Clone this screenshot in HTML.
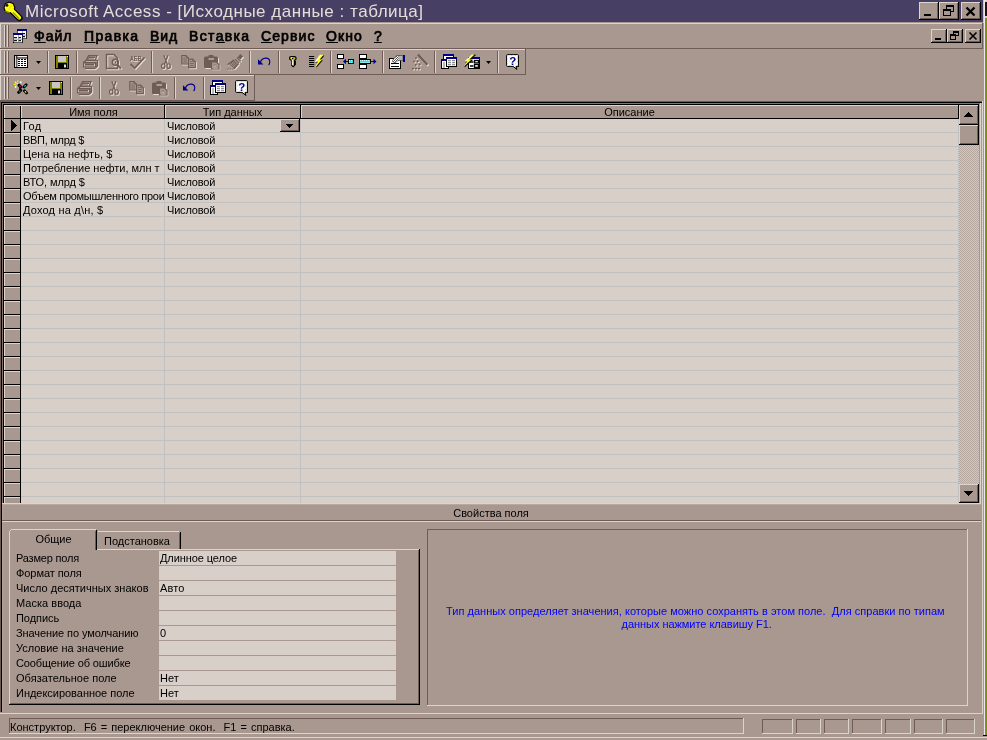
<!DOCTYPE html>
<html><head><meta charset="utf-8"><title>Microsoft Access</title>
<style>
html,body{margin:0;padding:0;background:#a9988f;}
#r{position:relative;width:987px;height:740px;overflow:hidden;background:#a9988f;font-family:"Liberation Sans",sans-serif;}
#r>div,#r>svg{position:absolute;}
#r{will-change:transform;}
.t{white-space:nowrap;}
u{text-decoration:underline;text-underline-offset:1px;text-decoration-thickness:1px;}
</style></head><body><div id="r">
<div style="left:0px;top:0px;width:983px;height:22px;background:#483f64;"></div>
<div class="t" style="left:25px;top:2px;font-size:17px;color:#e6ded6;line-height:20px;letter-spacing:0.523px;">Microsoft Access - [Исходные данные : таблица]</div>
<div style="left:919px;top:2px;width:20px;height:18px;background:#a9988f;"></div>
<div style="left:919px;top:2px;width:19px;height:1px;background:#ddd4cd;"></div>
<div style="left:919px;top:2px;width:1px;height:17px;background:#ddd4cd;"></div>
<div style="left:919px;top:19px;width:20px;height:1px;background:#000;"></div>
<div style="left:938px;top:2px;width:1px;height:18px;background:#000;"></div>
<div style="left:920px;top:18px;width:18px;height:1px;background:#6f5c56;"></div>
<div style="left:937px;top:3px;width:1px;height:16px;background:#6f5c56;"></div>
<div style="left:939px;top:2px;width:20px;height:18px;background:#a9988f;"></div>
<div style="left:939px;top:2px;width:19px;height:1px;background:#ddd4cd;"></div>
<div style="left:939px;top:2px;width:1px;height:17px;background:#ddd4cd;"></div>
<div style="left:939px;top:19px;width:20px;height:1px;background:#000;"></div>
<div style="left:958px;top:2px;width:1px;height:18px;background:#000;"></div>
<div style="left:940px;top:18px;width:18px;height:1px;background:#6f5c56;"></div>
<div style="left:957px;top:3px;width:1px;height:16px;background:#6f5c56;"></div>
<div style="left:961px;top:2px;width:20px;height:18px;background:#a9988f;"></div>
<div style="left:961px;top:2px;width:19px;height:1px;background:#ddd4cd;"></div>
<div style="left:961px;top:2px;width:1px;height:17px;background:#ddd4cd;"></div>
<div style="left:961px;top:19px;width:20px;height:1px;background:#000;"></div>
<div style="left:980px;top:2px;width:1px;height:18px;background:#000;"></div>
<div style="left:962px;top:18px;width:18px;height:1px;background:#6f5c56;"></div>
<div style="left:979px;top:3px;width:1px;height:16px;background:#6f5c56;"></div>
<div style="left:983px;top:0px;width:1px;height:23px;background:#cfc5be;"></div>
<div style="left:984px;top:0px;width:1px;height:740px;background:#efe8ea;"></div>
<div style="left:985px;top:0px;width:2px;height:740px;background:#7b9213;"></div>
<div style="left:985px;top:0px;width:2px;height:18px;background:#ddd4cd;"></div>
<div style="left:985px;top:2px;width:2px;height:14px;background:#1a1416;"></div>
<div style="left:983px;top:735px;width:4px;height:1px;background:#000;"></div>
<div style="left:983px;top:736px;width:4px;height:4px;background:#a9988f;"></div>
<div style="left:0px;top:23px;width:982px;height:1px;background:#ddd4cd;"></div>
<div style="left:0px;top:23px;width:1px;height:25px;background:#ddd4cd;"></div>
<div style="left:0px;top:48px;width:983px;height:1px;background:#6f5c56;"></div>
<div style="left:982px;top:23px;width:1px;height:26px;background:#6f5c56;"></div>
<div style="left:4px;top:25px;width:1px;height:22px;background:#ddd4cd;"></div>
<div style="left:5px;top:25px;width:1px;height:22px;background:#6f5c56;"></div>
<div style="left:7px;top:25px;width:1px;height:22px;background:#ddd4cd;"></div>
<div style="left:8px;top:25px;width:1px;height:22px;background:#6f5c56;"></div>
<div class="t" style="left:34px;top:28px;font-size:14px;color:#000;line-height:16px;-webkit-text-stroke:0.7px #000;letter-spacing:1.020px;"><u>Ф</u>айл</div>
<div class="t" style="left:84px;top:28px;font-size:14px;color:#000;line-height:16px;-webkit-text-stroke:0.7px #000;letter-spacing:1.367px;"><u>П</u>равка</div>
<div class="t" style="left:150px;top:28px;font-size:14px;color:#000;line-height:16px;-webkit-text-stroke:0.7px #000;letter-spacing:0.891px;"><u>В</u>ид</div>
<div class="t" style="left:189px;top:28px;font-size:14px;color:#000;line-height:16px;-webkit-text-stroke:0.7px #000;letter-spacing:1.350px;">Вст<u>а</u>вка</div>
<div class="t" style="left:261px;top:28px;font-size:14px;color:#000;line-height:16px;-webkit-text-stroke:0.7px #000;letter-spacing:1.091px;"><u>С</u>ервис</div>
<div class="t" style="left:326px;top:28px;font-size:14px;color:#000;line-height:16px;-webkit-text-stroke:0.7px #000;letter-spacing:1.113px;"><u>О</u>кно</div>
<div class="t" style="left:374px;top:28px;font-size:14px;color:#000;line-height:16px;-webkit-text-stroke:0.7px #000;letter-spacing:0.003px;"><u>?</u></div>
<div style="left:931px;top:29px;width:16px;height:14px;background:#a9988f;"></div>
<div style="left:931px;top:29px;width:15px;height:1px;background:#ddd4cd;"></div>
<div style="left:931px;top:29px;width:1px;height:13px;background:#ddd4cd;"></div>
<div style="left:931px;top:42px;width:16px;height:1px;background:#000;"></div>
<div style="left:946px;top:29px;width:1px;height:14px;background:#000;"></div>
<div style="left:932px;top:41px;width:14px;height:1px;background:#6f5c56;"></div>
<div style="left:945px;top:30px;width:1px;height:12px;background:#6f5c56;"></div>
<div style="left:947px;top:29px;width:16px;height:14px;background:#a9988f;"></div>
<div style="left:947px;top:29px;width:15px;height:1px;background:#ddd4cd;"></div>
<div style="left:947px;top:29px;width:1px;height:13px;background:#ddd4cd;"></div>
<div style="left:947px;top:42px;width:16px;height:1px;background:#000;"></div>
<div style="left:962px;top:29px;width:1px;height:14px;background:#000;"></div>
<div style="left:948px;top:41px;width:14px;height:1px;background:#6f5c56;"></div>
<div style="left:961px;top:30px;width:1px;height:12px;background:#6f5c56;"></div>
<div style="left:965px;top:29px;width:16px;height:14px;background:#a9988f;"></div>
<div style="left:965px;top:29px;width:15px;height:1px;background:#ddd4cd;"></div>
<div style="left:965px;top:29px;width:1px;height:13px;background:#ddd4cd;"></div>
<div style="left:965px;top:42px;width:16px;height:1px;background:#000;"></div>
<div style="left:980px;top:29px;width:1px;height:14px;background:#000;"></div>
<div style="left:966px;top:41px;width:14px;height:1px;background:#6f5c56;"></div>
<div style="left:979px;top:30px;width:1px;height:12px;background:#6f5c56;"></div>
<div style="left:0px;top:49px;width:526px;height:1px;background:#ddd4cd;"></div>
<div style="left:0px;top:49px;width:1px;height:25px;background:#ddd4cd;"></div>
<div style="left:0px;top:74px;width:526px;height:1px;background:#6f5c56;"></div>
<div style="left:525px;top:49px;width:1px;height:26px;background:#6f5c56;"></div>
<div style="left:4px;top:51px;width:1px;height:22px;background:#ddd4cd;"></div>
<div style="left:5px;top:51px;width:1px;height:22px;background:#6f5c56;"></div>
<div style="left:7px;top:51px;width:1px;height:22px;background:#ddd4cd;"></div>
<div style="left:8px;top:51px;width:1px;height:22px;background:#6f5c56;"></div>
<div style="left:47px;top:51px;width:1px;height:22px;background:#6f5c56;"></div>
<div style="left:48px;top:51px;width:1px;height:22px;background:#ddd4cd;"></div>
<div style="left:76px;top:51px;width:1px;height:22px;background:#6f5c56;"></div>
<div style="left:77px;top:51px;width:1px;height:22px;background:#ddd4cd;"></div>
<div style="left:151px;top:51px;width:1px;height:22px;background:#6f5c56;"></div>
<div style="left:152px;top:51px;width:1px;height:22px;background:#ddd4cd;"></div>
<div style="left:249px;top:51px;width:1px;height:22px;background:#6f5c56;"></div>
<div style="left:250px;top:51px;width:1px;height:22px;background:#ddd4cd;"></div>
<div style="left:278px;top:51px;width:1px;height:22px;background:#6f5c56;"></div>
<div style="left:279px;top:51px;width:1px;height:22px;background:#ddd4cd;"></div>
<div style="left:330px;top:51px;width:1px;height:22px;background:#6f5c56;"></div>
<div style="left:331px;top:51px;width:1px;height:22px;background:#ddd4cd;"></div>
<div style="left:382px;top:51px;width:1px;height:22px;background:#6f5c56;"></div>
<div style="left:383px;top:51px;width:1px;height:22px;background:#ddd4cd;"></div>
<div style="left:434px;top:51px;width:1px;height:22px;background:#6f5c56;"></div>
<div style="left:435px;top:51px;width:1px;height:22px;background:#ddd4cd;"></div>
<div style="left:497px;top:51px;width:1px;height:22px;background:#6f5c56;"></div>
<div style="left:498px;top:51px;width:1px;height:22px;background:#ddd4cd;"></div>
<div style="left:0px;top:75px;width:255px;height:1px;background:#ddd4cd;"></div>
<div style="left:0px;top:75px;width:1px;height:25px;background:#ddd4cd;"></div>
<div style="left:0px;top:100px;width:255px;height:1px;background:#6f5c56;"></div>
<div style="left:254px;top:75px;width:1px;height:26px;background:#6f5c56;"></div>
<div style="left:4px;top:77px;width:1px;height:22px;background:#ddd4cd;"></div>
<div style="left:5px;top:77px;width:1px;height:22px;background:#6f5c56;"></div>
<div style="left:7px;top:77px;width:1px;height:22px;background:#ddd4cd;"></div>
<div style="left:8px;top:77px;width:1px;height:22px;background:#6f5c56;"></div>
<div style="left:70px;top:77px;width:1px;height:22px;background:#6f5c56;"></div>
<div style="left:71px;top:77px;width:1px;height:22px;background:#ddd4cd;"></div>
<div style="left:99px;top:77px;width:1px;height:22px;background:#6f5c56;"></div>
<div style="left:100px;top:77px;width:1px;height:22px;background:#ddd4cd;"></div>
<div style="left:174px;top:77px;width:1px;height:22px;background:#6f5c56;"></div>
<div style="left:175px;top:77px;width:1px;height:22px;background:#ddd4cd;"></div>
<div style="left:203px;top:77px;width:1px;height:22px;background:#6f5c56;"></div>
<div style="left:204px;top:77px;width:1px;height:22px;background:#ddd4cd;"></div>
<div style="left:0px;top:101px;width:982px;height:1px;background:#6f5c56;"></div>
<div style="left:1px;top:102px;width:981px;height:1px;background:#000;"></div>
<div style="left:0px;top:101px;width:1px;height:611px;background:#6f5c56;"></div>
<div style="left:1px;top:102px;width:1px;height:610px;background:#000;"></div>
<div style="left:2px;top:103px;width:978px;height:1px;background:#86736b;"></div>
<div style="left:3px;top:104px;width:976px;height:1px;background:#000;"></div>
<div style="left:2px;top:103px;width:1px;height:400px;background:#86736b;"></div>
<div style="left:3px;top:104px;width:1px;height:399px;background:#000;"></div>
<div style="left:980px;top:103px;width:1px;height:401px;background:#ddd4cd;"></div>
<div style="left:982px;top:101px;width:1px;height:613px;background:#ddd4cd;"></div>
<div style="left:0px;top:713px;width:983px;height:1px;background:#ddd4cd;"></div>
<div style="left:4px;top:105px;width:954px;height:398px;background:#d8cfc9;"></div>
<div style="left:4px;top:105px;width:16px;height:398px;background:#a9988f;"></div>
<div style="left:4px;top:105px;width:1px;height:398px;background:#ddd4cd;"></div>
<div style="left:20px;top:105px;width:1px;height:398px;background:#000;"></div>
<div style="left:21px;top:105px;width:937px;height:13px;background:#a9988f;"></div>
<div style="left:4px;top:105px;width:954px;height:1px;background:#ddd4cd;"></div>
<div style="left:4px;top:118px;width:955px;height:1px;background:#000;"></div>
<div style="left:164px;top:105px;width:1px;height:13px;background:#000;"></div>
<div style="left:165px;top:105px;width:1px;height:13px;background:#ddd4cd;"></div>
<div style="left:300px;top:105px;width:1px;height:13px;background:#000;"></div>
<div style="left:301px;top:105px;width:1px;height:13px;background:#ddd4cd;"></div>
<div style="left:21px;top:105px;width:1px;height:13px;background:#ddd4cd;"></div>
<div style="left:958px;top:105px;width:1px;height:14px;background:#000;"></div>
<div class="t" style="left:22px;top:106px;width:143px;font-size:11px;color:#000;text-align:center;line-height:12px;">Имя поля</div>
<div class="t" style="left:165px;top:106px;width:135px;font-size:11px;color:#000;text-align:center;line-height:12px;">Тип данных</div>
<div class="t" style="left:301px;top:106px;width:657px;font-size:11px;color:#000;text-align:center;line-height:12px;">Описание</div>
<div style="left:21px;top:132px;width:937px;height:1px;background:#c1c1c1;"></div>
<div style="left:4px;top:132px;width:16px;height:1px;background:#000;"></div>
<div style="left:5px;top:133px;width:15px;height:1px;background:#ddd4cd;"></div>
<div style="left:21px;top:146px;width:937px;height:1px;background:#c1c1c1;"></div>
<div style="left:4px;top:146px;width:16px;height:1px;background:#000;"></div>
<div style="left:5px;top:147px;width:15px;height:1px;background:#ddd4cd;"></div>
<div style="left:21px;top:160px;width:937px;height:1px;background:#c1c1c1;"></div>
<div style="left:4px;top:160px;width:16px;height:1px;background:#000;"></div>
<div style="left:5px;top:161px;width:15px;height:1px;background:#ddd4cd;"></div>
<div style="left:21px;top:174px;width:937px;height:1px;background:#c1c1c1;"></div>
<div style="left:4px;top:174px;width:16px;height:1px;background:#000;"></div>
<div style="left:5px;top:175px;width:15px;height:1px;background:#ddd4cd;"></div>
<div style="left:21px;top:188px;width:937px;height:1px;background:#c1c1c1;"></div>
<div style="left:4px;top:188px;width:16px;height:1px;background:#000;"></div>
<div style="left:5px;top:189px;width:15px;height:1px;background:#ddd4cd;"></div>
<div style="left:21px;top:202px;width:937px;height:1px;background:#c1c1c1;"></div>
<div style="left:4px;top:202px;width:16px;height:1px;background:#000;"></div>
<div style="left:5px;top:203px;width:15px;height:1px;background:#ddd4cd;"></div>
<div style="left:21px;top:216px;width:937px;height:1px;background:#c1c1c1;"></div>
<div style="left:4px;top:216px;width:16px;height:1px;background:#000;"></div>
<div style="left:5px;top:217px;width:15px;height:1px;background:#ddd4cd;"></div>
<div style="left:21px;top:230px;width:937px;height:1px;background:#c1c1c1;"></div>
<div style="left:4px;top:230px;width:16px;height:1px;background:#000;"></div>
<div style="left:5px;top:231px;width:15px;height:1px;background:#ddd4cd;"></div>
<div style="left:21px;top:244px;width:937px;height:1px;background:#c1c1c1;"></div>
<div style="left:4px;top:244px;width:16px;height:1px;background:#000;"></div>
<div style="left:5px;top:245px;width:15px;height:1px;background:#ddd4cd;"></div>
<div style="left:21px;top:258px;width:937px;height:1px;background:#c1c1c1;"></div>
<div style="left:4px;top:258px;width:16px;height:1px;background:#000;"></div>
<div style="left:5px;top:259px;width:15px;height:1px;background:#ddd4cd;"></div>
<div style="left:21px;top:272px;width:937px;height:1px;background:#c1c1c1;"></div>
<div style="left:4px;top:272px;width:16px;height:1px;background:#000;"></div>
<div style="left:5px;top:273px;width:15px;height:1px;background:#ddd4cd;"></div>
<div style="left:21px;top:286px;width:937px;height:1px;background:#c1c1c1;"></div>
<div style="left:4px;top:286px;width:16px;height:1px;background:#000;"></div>
<div style="left:5px;top:287px;width:15px;height:1px;background:#ddd4cd;"></div>
<div style="left:21px;top:300px;width:937px;height:1px;background:#c1c1c1;"></div>
<div style="left:4px;top:300px;width:16px;height:1px;background:#000;"></div>
<div style="left:5px;top:301px;width:15px;height:1px;background:#ddd4cd;"></div>
<div style="left:21px;top:314px;width:937px;height:1px;background:#c1c1c1;"></div>
<div style="left:4px;top:314px;width:16px;height:1px;background:#000;"></div>
<div style="left:5px;top:315px;width:15px;height:1px;background:#ddd4cd;"></div>
<div style="left:21px;top:328px;width:937px;height:1px;background:#c1c1c1;"></div>
<div style="left:4px;top:328px;width:16px;height:1px;background:#000;"></div>
<div style="left:5px;top:329px;width:15px;height:1px;background:#ddd4cd;"></div>
<div style="left:21px;top:342px;width:937px;height:1px;background:#c1c1c1;"></div>
<div style="left:4px;top:342px;width:16px;height:1px;background:#000;"></div>
<div style="left:5px;top:343px;width:15px;height:1px;background:#ddd4cd;"></div>
<div style="left:21px;top:356px;width:937px;height:1px;background:#c1c1c1;"></div>
<div style="left:4px;top:356px;width:16px;height:1px;background:#000;"></div>
<div style="left:5px;top:357px;width:15px;height:1px;background:#ddd4cd;"></div>
<div style="left:21px;top:370px;width:937px;height:1px;background:#c1c1c1;"></div>
<div style="left:4px;top:370px;width:16px;height:1px;background:#000;"></div>
<div style="left:5px;top:371px;width:15px;height:1px;background:#ddd4cd;"></div>
<div style="left:21px;top:384px;width:937px;height:1px;background:#c1c1c1;"></div>
<div style="left:4px;top:384px;width:16px;height:1px;background:#000;"></div>
<div style="left:5px;top:385px;width:15px;height:1px;background:#ddd4cd;"></div>
<div style="left:21px;top:398px;width:937px;height:1px;background:#c1c1c1;"></div>
<div style="left:4px;top:398px;width:16px;height:1px;background:#000;"></div>
<div style="left:5px;top:399px;width:15px;height:1px;background:#ddd4cd;"></div>
<div style="left:21px;top:412px;width:937px;height:1px;background:#c1c1c1;"></div>
<div style="left:4px;top:412px;width:16px;height:1px;background:#000;"></div>
<div style="left:5px;top:413px;width:15px;height:1px;background:#ddd4cd;"></div>
<div style="left:21px;top:426px;width:937px;height:1px;background:#c1c1c1;"></div>
<div style="left:4px;top:426px;width:16px;height:1px;background:#000;"></div>
<div style="left:5px;top:427px;width:15px;height:1px;background:#ddd4cd;"></div>
<div style="left:21px;top:440px;width:937px;height:1px;background:#c1c1c1;"></div>
<div style="left:4px;top:440px;width:16px;height:1px;background:#000;"></div>
<div style="left:5px;top:441px;width:15px;height:1px;background:#ddd4cd;"></div>
<div style="left:21px;top:454px;width:937px;height:1px;background:#c1c1c1;"></div>
<div style="left:4px;top:454px;width:16px;height:1px;background:#000;"></div>
<div style="left:5px;top:455px;width:15px;height:1px;background:#ddd4cd;"></div>
<div style="left:21px;top:468px;width:937px;height:1px;background:#c1c1c1;"></div>
<div style="left:4px;top:468px;width:16px;height:1px;background:#000;"></div>
<div style="left:5px;top:469px;width:15px;height:1px;background:#ddd4cd;"></div>
<div style="left:21px;top:482px;width:937px;height:1px;background:#c1c1c1;"></div>
<div style="left:4px;top:482px;width:16px;height:1px;background:#000;"></div>
<div style="left:5px;top:483px;width:15px;height:1px;background:#ddd4cd;"></div>
<div style="left:21px;top:496px;width:937px;height:1px;background:#c1c1c1;"></div>
<div style="left:4px;top:496px;width:16px;height:1px;background:#000;"></div>
<div style="left:5px;top:497px;width:15px;height:1px;background:#ddd4cd;"></div>
<div style="left:164px;top:119px;width:1px;height:384px;background:#c1c1c1;"></div>
<div style="left:300px;top:119px;width:1px;height:384px;background:#c1c1c1;"></div>
<div style="left:958px;top:119px;width:1px;height:384px;background:#c1c1c1;"></div>
<div class="t" style="left:23px;top:120px;width:141px;font-size:11px;color:#000;line-height:12px;overflow:hidden;white-space:nowrap;letter-spacing:0.361px;">Год</div>
<div class="t" style="left:167px;top:120px;font-size:11px;color:#000;line-height:12px;letter-spacing:-0.178px;">Числовой</div>
<div class="t" style="left:23px;top:134px;width:141px;font-size:11px;color:#000;line-height:12px;overflow:hidden;white-space:nowrap;letter-spacing:-0.286px;">ВВП, млрд $</div>
<div class="t" style="left:167px;top:134px;font-size:11px;color:#000;line-height:12px;letter-spacing:-0.178px;">Числовой</div>
<div class="t" style="left:23px;top:148px;width:141px;font-size:11px;color:#000;line-height:12px;overflow:hidden;white-space:nowrap;letter-spacing:0.033px;">Цена на нефть, $</div>
<div class="t" style="left:167px;top:148px;font-size:11px;color:#000;line-height:12px;letter-spacing:-0.178px;">Числовой</div>
<div class="t" style="left:23px;top:162px;width:141px;font-size:11px;color:#000;line-height:12px;overflow:hidden;white-space:nowrap;letter-spacing:-0.026px;">Потребление нефти, млн т</div>
<div class="t" style="left:167px;top:162px;font-size:11px;color:#000;line-height:12px;letter-spacing:-0.178px;">Числовой</div>
<div class="t" style="left:23px;top:176px;width:141px;font-size:11px;color:#000;line-height:12px;overflow:hidden;white-space:nowrap;letter-spacing:-0.112px;">ВТО, млрд $</div>
<div class="t" style="left:167px;top:176px;font-size:11px;color:#000;line-height:12px;letter-spacing:-0.178px;">Числовой</div>
<div class="t" style="left:23px;top:190px;width:141px;font-size:11px;color:#000;line-height:12px;overflow:hidden;white-space:nowrap;letter-spacing:-0.299px;">Объем промышленного прои</div>
<div class="t" style="left:167px;top:190px;font-size:11px;color:#000;line-height:12px;letter-spacing:-0.178px;">Числовой</div>
<div class="t" style="left:23px;top:204px;width:141px;font-size:11px;color:#000;line-height:12px;overflow:hidden;white-space:nowrap;letter-spacing:0.198px;">Доход на д\н, $</div>
<div class="t" style="left:167px;top:204px;font-size:11px;color:#000;line-height:12px;letter-spacing:-0.178px;">Числовой</div>
<svg style="left:11px;top:120px" width="7" height="11" shape-rendering="crispEdges"><path d="M0 0 L6 5.5 L0 11Z" fill="#000"/></svg>
<div style="left:280px;top:119px;width:20px;height:13px;background:#a9988f;"></div>
<div style="left:280px;top:119px;width:19px;height:1px;background:#ddd4cd;"></div>
<div style="left:280px;top:119px;width:1px;height:12px;background:#ddd4cd;"></div>
<div style="left:280px;top:131px;width:20px;height:1px;background:#000;"></div>
<div style="left:299px;top:119px;width:1px;height:13px;background:#000;"></div>
<div style="left:281px;top:130px;width:18px;height:1px;background:#6f5c56;"></div>
<div style="left:298px;top:120px;width:1px;height:11px;background:#6f5c56;"></div>
<svg style="left:286px;top:124px" width="7" height="4" shape-rendering="crispEdges"><path d="M0 0H7L3.5 4Z" fill="#000"/></svg>
<div style="left:959px;top:105px;width:20px;height:398px;background:repeating-conic-gradient(#d2c8c1 0% 25%,#b5a69e 0% 50%) 0 0/2px 2px"></div>
<div style="left:959px;top:105px;width:20px;height:20px;background:#a9988f;"></div>
<div style="left:959px;top:105px;width:19px;height:1px;background:#ddd4cd;"></div>
<div style="left:959px;top:105px;width:1px;height:19px;background:#ddd4cd;"></div>
<div style="left:959px;top:124px;width:20px;height:1px;background:#000;"></div>
<div style="left:978px;top:105px;width:1px;height:20px;background:#000;"></div>
<div style="left:960px;top:123px;width:18px;height:1px;background:#6f5c56;"></div>
<div style="left:977px;top:106px;width:1px;height:18px;background:#6f5c56;"></div>
<div style="left:959px;top:125px;width:20px;height:20px;background:#a9988f;"></div>
<div style="left:959px;top:125px;width:19px;height:1px;background:#ddd4cd;"></div>
<div style="left:959px;top:125px;width:1px;height:19px;background:#ddd4cd;"></div>
<div style="left:959px;top:144px;width:20px;height:1px;background:#000;"></div>
<div style="left:978px;top:125px;width:1px;height:20px;background:#000;"></div>
<div style="left:960px;top:143px;width:18px;height:1px;background:#6f5c56;"></div>
<div style="left:977px;top:126px;width:1px;height:18px;background:#6f5c56;"></div>
<div style="left:959px;top:484px;width:20px;height:19px;background:#a9988f;"></div>
<div style="left:959px;top:484px;width:19px;height:1px;background:#ddd4cd;"></div>
<div style="left:959px;top:484px;width:1px;height:18px;background:#ddd4cd;"></div>
<div style="left:959px;top:502px;width:20px;height:1px;background:#000;"></div>
<div style="left:978px;top:484px;width:1px;height:19px;background:#000;"></div>
<div style="left:960px;top:501px;width:18px;height:1px;background:#6f5c56;"></div>
<div style="left:977px;top:485px;width:1px;height:17px;background:#6f5c56;"></div>
<svg style="left:963px;top:112px" width="10" height="5" shape-rendering="crispEdges"><path d="M0 5H10L5 0Z" fill="#000"/></svg>
<svg style="left:963px;top:491px" width="10" height="5" shape-rendering="crispEdges"><path d="M0 0H10L5 5Z" fill="#000"/></svg>
<div style="left:2px;top:503px;width:979px;height:1px;background:#ddd4cd;"></div>
<div style="left:2px;top:504px;width:979px;height:1px;background:#b8a9a0;"></div>
<div style="left:2px;top:504px;width:1px;height:208px;background:#b3a39a;"></div>
<div class="t" style="left:2px;top:507px;width:978px;font-size:11px;color:#000;text-align:center;line-height:12px;">Свойства поля</div>
<div style="left:2px;top:520px;width:979px;height:1px;background:#6f5c56;"></div>
<div style="left:2px;top:521px;width:979px;height:1px;background:#ddd4cd;"></div>
<div style="left:9px;top:549px;width:410px;height:1px;background:#ddd4cd;"></div>
<div style="left:9px;top:549px;width:1px;height:155px;background:#ddd4cd;"></div>
<div style="left:9px;top:704px;width:411px;height:1px;background:#000;"></div>
<div style="left:419px;top:549px;width:1px;height:156px;background:#000;"></div>
<div style="left:10px;top:703px;width:409px;height:1px;background:#6f5c56;"></div>
<div style="left:418px;top:550px;width:1px;height:154px;background:#6f5c56;"></div>
<div style="left:10px;top:530px;width:87px;height:20px;background:#a9988f;"></div>
<div style="left:11px;top:529px;width:85px;height:1px;background:#ddd4cd;"></div>
<div style="left:9px;top:531px;width:1px;height:19px;background:#ddd4cd;"></div>
<div style="left:10px;top:530px;width:1px;height:1px;background:#ddd4cd;"></div>
<div style="left:96px;top:530px;width:1px;height:20px;background:#000;"></div>
<div style="left:95px;top:531px;width:1px;height:19px;background:#6f5c56;"></div>
<div style="left:98px;top:531px;width:81px;height:1px;background:#ddd4cd;"></div>
<div style="left:180px;top:532px;width:1px;height:17px;background:#000;"></div>
<div style="left:179px;top:533px;width:1px;height:16px;background:#6f5c56;"></div>
<div class="t" style="left:10px;top:533px;width:87px;font-size:11px;color:#000;text-align:center;line-height:12px;">Общие</div>
<div class="t" style="left:96px;top:535px;width:82px;font-size:11px;color:#000;text-align:center;line-height:12px;">Подстановка</div>
<div style="left:159px;top:551px;width:237px;height:14px;background:#d8cfc9;"></div>
<div class="t" style="left:16px;top:552px;font-size:11px;color:#000;line-height:12px;letter-spacing:-0.189px;">Размер поля</div>
<div class="t" style="left:160px;top:552px;font-size:11px;color:#000;line-height:12px;letter-spacing:-0.090px;">Длинное целое</div>
<div style="left:159px;top:566px;width:237px;height:14px;background:#d8cfc9;"></div>
<div class="t" style="left:16px;top:567px;font-size:11px;color:#000;line-height:12px;letter-spacing:-0.059px;">Формат поля</div>
<div style="left:159px;top:581px;width:237px;height:14px;background:#d8cfc9;"></div>
<div class="t" style="left:16px;top:582px;font-size:11px;color:#000;line-height:12px;letter-spacing:0.010px;">Число десятичных знаков</div>
<div class="t" style="left:160px;top:582px;font-size:11px;color:#000;line-height:12px;letter-spacing:0.129px;">Авто</div>
<div style="left:159px;top:596px;width:237px;height:14px;background:#d8cfc9;"></div>
<div class="t" style="left:16px;top:597px;font-size:11px;color:#000;line-height:12px;letter-spacing:0.026px;">Маска ввода</div>
<div style="left:159px;top:611px;width:237px;height:14px;background:#d8cfc9;"></div>
<div class="t" style="left:16px;top:612px;font-size:11px;color:#000;line-height:12px;letter-spacing:-0.050px;">Подпись</div>
<div style="left:159px;top:626px;width:237px;height:14px;background:#d8cfc9;"></div>
<div class="t" style="left:16px;top:627px;font-size:11px;color:#000;line-height:12px;letter-spacing:-0.085px;">Значение по умолчанию</div>
<div class="t" style="left:160px;top:627px;font-size:11px;color:#000;line-height:12px;letter-spacing:-0.025px;">0</div>
<div style="left:159px;top:641px;width:237px;height:14px;background:#d8cfc9;"></div>
<div class="t" style="left:16px;top:642px;font-size:11px;color:#000;line-height:12px;letter-spacing:-0.011px;">Условие на значение</div>
<div style="left:159px;top:656px;width:237px;height:14px;background:#d8cfc9;"></div>
<div class="t" style="left:16px;top:657px;font-size:11px;color:#000;line-height:12px;letter-spacing:-0.123px;">Сообщение об ошибке</div>
<div style="left:159px;top:671px;width:237px;height:14px;background:#d8cfc9;"></div>
<div class="t" style="left:16px;top:672px;font-size:11px;color:#000;line-height:12px;letter-spacing:0.038px;">Обязательное поле</div>
<div class="t" style="left:160px;top:672px;font-size:11px;color:#000;line-height:12px;letter-spacing:0.089px;">Нет</div>
<div style="left:159px;top:686px;width:237px;height:14px;background:#d8cfc9;"></div>
<div class="t" style="left:16px;top:687px;font-size:11px;color:#000;line-height:12px;letter-spacing:-0.024px;">Индексированное поле</div>
<div class="t" style="left:160px;top:687px;font-size:11px;color:#000;line-height:12px;letter-spacing:0.089px;">Нет</div>
<div style="left:427px;top:529px;width:541px;height:1px;background:#6f5c56;"></div>
<div style="left:427px;top:529px;width:1px;height:177px;background:#6f5c56;"></div>
<div style="left:427px;top:705px;width:541px;height:1px;background:#ddd4cd;"></div>
<div style="left:967px;top:529px;width:1px;height:177px;background:#ddd4cd;"></div>
<div class="t" style="left:446px;top:605px;font-size:11px;color:#0000ff;line-height:13px;letter-spacing:0.025px;">Тип данных определяет значения, которые можно сохранять в этом поле.&nbsp; Для справки по типам</div>
<div class="t" style="left:621.5px;top:618px;font-size:11px;color:#0000ff;line-height:13px;letter-spacing:-0.036px;">данных нажмите клавишу F1.</div>
<div style="left:9px;top:718px;width:735px;height:1px;background:#6f5c56;"></div>
<div style="left:9px;top:718px;width:1px;height:16px;background:#6f5c56;"></div>
<div style="left:9px;top:733px;width:735px;height:1px;background:#ddd4cd;"></div>
<div style="left:743px;top:718px;width:1px;height:16px;background:#ddd4cd;"></div>
<div style="left:762px;top:719px;width:31px;height:1px;background:#6f5c56;"></div>
<div style="left:762px;top:719px;width:1px;height:15px;background:#6f5c56;"></div>
<div style="left:762px;top:733px;width:31px;height:1px;background:#ddd4cd;"></div>
<div style="left:792px;top:719px;width:1px;height:15px;background:#ddd4cd;"></div>
<div style="left:796px;top:719px;width:25px;height:1px;background:#6f5c56;"></div>
<div style="left:796px;top:719px;width:1px;height:15px;background:#6f5c56;"></div>
<div style="left:796px;top:733px;width:25px;height:1px;background:#ddd4cd;"></div>
<div style="left:820px;top:719px;width:1px;height:15px;background:#ddd4cd;"></div>
<div style="left:824px;top:719px;width:25px;height:1px;background:#6f5c56;"></div>
<div style="left:824px;top:719px;width:1px;height:15px;background:#6f5c56;"></div>
<div style="left:824px;top:733px;width:25px;height:1px;background:#ddd4cd;"></div>
<div style="left:848px;top:719px;width:1px;height:15px;background:#ddd4cd;"></div>
<div style="left:852px;top:719px;width:30px;height:1px;background:#6f5c56;"></div>
<div style="left:852px;top:719px;width:1px;height:15px;background:#6f5c56;"></div>
<div style="left:852px;top:733px;width:30px;height:1px;background:#ddd4cd;"></div>
<div style="left:881px;top:719px;width:1px;height:15px;background:#ddd4cd;"></div>
<div style="left:885px;top:719px;width:26px;height:1px;background:#6f5c56;"></div>
<div style="left:885px;top:719px;width:1px;height:15px;background:#6f5c56;"></div>
<div style="left:885px;top:733px;width:26px;height:1px;background:#ddd4cd;"></div>
<div style="left:910px;top:719px;width:1px;height:15px;background:#ddd4cd;"></div>
<div style="left:914px;top:719px;width:29px;height:1px;background:#6f5c56;"></div>
<div style="left:914px;top:719px;width:1px;height:15px;background:#6f5c56;"></div>
<div style="left:914px;top:733px;width:29px;height:1px;background:#ddd4cd;"></div>
<div style="left:942px;top:719px;width:1px;height:15px;background:#ddd4cd;"></div>
<div style="left:946px;top:719px;width:29px;height:1px;background:#6f5c56;"></div>
<div style="left:946px;top:719px;width:1px;height:15px;background:#6f5c56;"></div>
<div style="left:946px;top:733px;width:29px;height:1px;background:#ddd4cd;"></div>
<div style="left:974px;top:719px;width:1px;height:15px;background:#ddd4cd;"></div>
<div class="t" style="left:10px;top:721px;font-size:11px;color:#000;line-height:12px;word-spacing:1px;">Конструктор.&nbsp; F6 = переключение окон.&nbsp; F1 = справка.</div>
<div style="left:0px;top:737px;width:987px;height:1px;background:#ddd4cd;"></div>
<svg style="left:0;top:0" width="987" height="110" viewBox="0 0 987 110"><defs><pattern id="chk" width="2" height="2" patternUnits="userSpaceOnUse"><rect width="2" height="2" fill="#fff"/><rect width="1" height="1" fill="#555"/><rect x="1" y="1" width="1" height="1" fill="#555"/></pattern><pattern id="dots" width="4" height="4" patternUnits="userSpaceOnUse"><rect width="4" height="4" fill="#fff"/><rect x="1" y="1" width="1.2" height="1.2" fill="#ffff00"/><rect x="3" y="3" width="1.2" height="1.2" fill="#ffff00"/></pattern></defs>
<path d="M11.5 10 L19.4 17.9" fill="none" stroke="#000" stroke-width="6.4" stroke-linecap="round"/>
<path d="M9.3 1.6L13.6 3.2L15.4 7.6L13.6 12L9.3 13.8L5 12.4L3.4 7.8L5 3.2Z" fill="#000" />
<path d="M11.5 10 L19.2 17.7" fill="none" stroke="#ffff00" stroke-width="4" stroke-linecap="round"/>
<path d="M9.3 2.8L12.8 4.1L14.2 7.7L12.8 11.2L9.3 12.6L5.9 11.4L4.6 7.8L5.9 4.1Z" fill="#ffff00" />
<path d="M13 12.4 L19.2 18.6" fill="none" stroke="#8a8a00" stroke-width="1.2" />
<path d="M12.8 10.2 L18.4 15.8" fill="none" stroke="#e8e8a0" stroke-width="1" stroke-dasharray="1 1"/>
<path d="M8.6 9.2 L12.2 5.2" fill="none" stroke="#d0d080" stroke-width="1.5" stroke-dasharray="1 0.8"/>
<ellipse cx="6.9" cy="5.4" rx="1.5" ry="1.4" fill="#1a1a00"/>
<path d="M4.8 11.2 L9.8 13" fill="none" stroke="#7a7a00" stroke-width="1.6" />
<rect x="924" y="14" width="7" height="2" fill="#000"/>
<rect x="946.5" y="5.5" width="7" height="6" fill="none" stroke="#000" stroke-width="1"/>
<rect x="946" y="5" width="8" height="2" fill="#000"/>
<rect x="943.5" y="9.5" width="7" height="6" fill="#a9988f" stroke="#000" stroke-width="1"/>
<rect x="943" y="9" width="8" height="2" fill="#000"/>
<path d="M966.5 7.5 L974.5 15.5 M974.5 7.5 L966.5 15.5" fill="none" stroke="#000" stroke-width="2.3" />
<rect x="935" y="38" width="6" height="2" fill="#000"/>
<rect x="953.5" y="31.5" width="5" height="4" fill="none" stroke="#000" stroke-width="1"/>
<rect x="953" y="31" width="6" height="2" fill="#000"/>
<rect x="950.5" y="34.5" width="5" height="5" fill="#a9988f" stroke="#000" stroke-width="1"/>
<rect x="950" y="34" width="6" height="2" fill="#000"/>
<path d="M969.5 32.5 L976.5 39.5 M976.5 32.5 L969.5 39.5" fill="none" stroke="#000" stroke-width="1.6" />
<rect x="17.5" y="29.5" width="9" height="9" fill="#fff" stroke="#555" stroke-width="1"/>
<rect x="17" y="29" width="10" height="2" fill="#00008c"/>
<rect x="17" y="38" width="10" height="1" fill="#000"/>
<rect x="26" y="31" width="1" height="8" fill="#222"/>
<rect x="18" y="33" width="3" height="1.2" fill="#111"/>
<rect x="22" y="33" width="3" height="1.2" fill="#111"/>
<rect x="18" y="34.8" width="8" height="0.8" fill="#9a9a9a"/>
<rect x="18" y="36" width="3" height="1.2" fill="#111"/>
<rect x="22" y="36" width="3" height="1.2" fill="#111"/>
<rect x="18" y="37.8" width="8" height="0.8" fill="#9a9a9a"/>
<rect x="22" y="31" width="0.8" height="7" fill="#9a9a9a"/>
<rect x="13.5" y="33.5" width="9" height="9" fill="#fff" stroke="#555" stroke-width="1"/>
<rect x="13" y="33" width="10" height="2" fill="#00008c"/>
<rect x="13" y="42" width="10" height="1" fill="#000"/>
<rect x="22" y="35" width="1" height="8" fill="#222"/>
<rect x="14" y="37" width="3" height="1.2" fill="#111"/>
<rect x="18" y="37" width="3" height="1.2" fill="#111"/>
<rect x="14" y="38.8" width="8" height="0.8" fill="#9a9a9a"/>
<rect x="14" y="40" width="3" height="1.2" fill="#111"/>
<rect x="18" y="40" width="3" height="1.2" fill="#111"/>
<rect x="14" y="41.8" width="8" height="0.8" fill="#9a9a9a"/>
<rect x="18" y="35" width="0.8" height="7" fill="#9a9a9a"/>
<path d="M36 61H41L38.5 64.0Z" fill="#000" />
<path d="M486 61H491L488.5 64.0Z" fill="#000" />
<path d="M36 87H41L38.5 90.0Z" fill="#000" />
<rect x="14.5" y="55.5" width="13" height="12" fill="#fff" stroke="#000" stroke-width="1"/>
<rect x="15" y="56" width="12" height="1.7" fill="#9a9a9a"/>
<rect x="17" y="56.1" width="10" height="0.9" fill="#fff"/>
<rect x="15" y="56" width="1.3" height="11" fill="#d8d8d8"/>
<rect x="16.4" y="56" width="0.9" height="11" fill="#000"/>
<rect x="16.4" y="57.6" width="10.6" height="0.9" fill="#000"/>
<rect x="18" y="59" width="2" height="1" fill="#000" shape-rendering="crispEdges"/>
<rect x="21" y="59" width="2" height="1" fill="#000" shape-rendering="crispEdges"/>
<rect x="24" y="59" width="2" height="1" fill="#000" shape-rendering="crispEdges"/>
<rect x="18" y="61" width="2" height="1" fill="#000" shape-rendering="crispEdges"/>
<rect x="21" y="61" width="2" height="1" fill="#000" shape-rendering="crispEdges"/>
<rect x="24" y="61" width="2" height="1" fill="#000" shape-rendering="crispEdges"/>
<rect x="18" y="63" width="2" height="1" fill="#000" shape-rendering="crispEdges"/>
<rect x="21" y="63" width="2" height="1" fill="#000" shape-rendering="crispEdges"/>
<rect x="24" y="63" width="2" height="1" fill="#000" shape-rendering="crispEdges"/>
<rect x="18" y="65" width="2" height="1" fill="#000" shape-rendering="crispEdges"/>
<rect x="21" y="65" width="2" height="1" fill="#000" shape-rendering="crispEdges"/>
<rect x="24" y="65" width="2" height="1" fill="#000" shape-rendering="crispEdges"/>
<rect x="55.5" y="55.5" width="13" height="13" fill="#808000" stroke="#000" stroke-width="1"/>
<rect x="58" y="56" width="8" height="6" fill="#c6c6c6"/>
<rect x="67" y="56" width="1" height="1" fill="#fff"/>
<rect x="58" y="63" width="9" height="5" fill="#000"/>
<rect x="64" y="64.5" width="2" height="3" fill="#e0e0e0"/>
<rect x="49.5" y="81.5" width="13" height="13" fill="#808000" stroke="#000" stroke-width="1"/>
<rect x="52" y="82" width="8" height="6" fill="#c6c6c6"/>
<rect x="61" y="82" width="1" height="1" fill="#fff"/>
<rect x="52" y="89" width="9" height="5" fill="#000"/>
<rect x="58" y="90.5" width="2" height="3" fill="#e0e0e0"/>
<g transform="translate(1,1)">
<path d="M88.5 55.6H97L95 60.5H86Z" fill="none" stroke="#e6ddd6" stroke-width="1.3" />
<path d="M89 57.4H95M88 59H94" fill="none" stroke="#e6ddd6" stroke-width="1.1" />
<path d="M83.5 62.5L86 60.5M95 60.5L97.5 60.5L97.5 66L95.5 68" fill="none" stroke="#e6ddd6" stroke-width="1.3" />
<rect x="83.6" y="62.5" width="12" height="4.5" fill="none" stroke="#e6ddd6" stroke-width="1.3"/>
<path d="M85 64.7H94" fill="none" stroke="#e6ddd6" stroke-width="1.8" />
<path d="M84.5 68.5H95.5" fill="none" stroke="#e6ddd6" stroke-width="1.3" />
<path d="M96.3 62V66.5" fill="none" stroke="#e6ddd6" stroke-width="1" />
<path d="M84.5 63.6H95" fill="none" stroke="#e6ddd6" stroke-width="0.8" />
<path d="M87.5 60L89.5 56H96" fill="none" stroke="#e6ddd6" stroke-width="0.9" />
</g>
<path d="M88.5 55.6H97L95 60.5H86Z" fill="none" stroke="#6f5c56" stroke-width="1.3" />
<path d="M89 57.4H95M88 59H94" fill="none" stroke="#6f5c56" stroke-width="1.1" />
<path d="M83.5 62.5L86 60.5M95 60.5L97.5 60.5L97.5 66L95.5 68" fill="none" stroke="#6f5c56" stroke-width="1.3" />
<rect x="83.6" y="62.5" width="12" height="4.5" fill="none" stroke="#6f5c56" stroke-width="1.3"/>
<path d="M85 64.7H94" fill="none" stroke="#6f5c56" stroke-width="1.8" />
<path d="M84.5 68.5H95.5" fill="none" stroke="#6f5c56" stroke-width="1.3" />
<path d="M96.3 62V66.5" fill="none" stroke="#6f5c56" stroke-width="1" />
<path d="M84.5 63.6H95" fill="none" stroke="#6f5c56" stroke-width="0.8" />
<path d="M87.5 60L89.5 56H96" fill="none" stroke="#6f5c56" stroke-width="0.9" />
<g transform="translate(1,1)">
<path d="M82.5 81.6H91L89 86.5H80Z" fill="none" stroke="#e6ddd6" stroke-width="1.3" />
<path d="M83 83.4H89M82 85H88" fill="none" stroke="#e6ddd6" stroke-width="1.1" />
<path d="M77.5 88.5L80 86.5M89 86.5L91.5 86.5L91.5 92L89.5 94" fill="none" stroke="#e6ddd6" stroke-width="1.3" />
<rect x="77.6" y="88.5" width="12" height="4.5" fill="none" stroke="#e6ddd6" stroke-width="1.3"/>
<path d="M79 90.7H88" fill="none" stroke="#e6ddd6" stroke-width="1.8" />
<path d="M78.5 94.5H89.5" fill="none" stroke="#e6ddd6" stroke-width="1.3" />
<path d="M90.3 88V92.5" fill="none" stroke="#e6ddd6" stroke-width="1" />
<path d="M78.5 89.6H89" fill="none" stroke="#e6ddd6" stroke-width="0.8" />
<path d="M81.5 86L83.5 82H90" fill="none" stroke="#e6ddd6" stroke-width="0.9" />
</g>
<path d="M82.5 81.6H91L89 86.5H80Z" fill="none" stroke="#6f5c56" stroke-width="1.3" />
<path d="M83 83.4H89M82 85H88" fill="none" stroke="#6f5c56" stroke-width="1.1" />
<path d="M77.5 88.5L80 86.5M89 86.5L91.5 86.5L91.5 92L89.5 94" fill="none" stroke="#6f5c56" stroke-width="1.3" />
<rect x="77.6" y="88.5" width="12" height="4.5" fill="none" stroke="#6f5c56" stroke-width="1.3"/>
<path d="M79 90.7H88" fill="none" stroke="#6f5c56" stroke-width="1.8" />
<path d="M78.5 94.5H89.5" fill="none" stroke="#6f5c56" stroke-width="1.3" />
<path d="M90.3 88V92.5" fill="none" stroke="#6f5c56" stroke-width="1" />
<path d="M78.5 89.6H89" fill="none" stroke="#6f5c56" stroke-width="0.8" />
<path d="M81.5 86L83.5 82H90" fill="none" stroke="#6f5c56" stroke-width="0.9" />
<g transform="translate(1,1)">
<path d="M106.5 54.5H114L117.5 58V68.5H106.5Z" fill="none" stroke="#e6ddd6" stroke-width="1.5" />
<circle cx="115.3" cy="62.3" r="3" fill="none" stroke="#e6ddd6" stroke-width="1.6"/>
<path d="M117.5 64.8L121 68.5" fill="none" stroke="#e6ddd6" stroke-width="1.8" />
<path d="M114.5 61L116 62L114.8 63.5" fill="none" stroke="#e6ddd6" stroke-width="1" />
</g>
<path d="M106.5 54.5H114L117.5 58V68.5H106.5Z" fill="none" stroke="#6f5c56" stroke-width="1.5" />
<circle cx="115.3" cy="62.3" r="3" fill="none" stroke="#6f5c56" stroke-width="1.6"/>
<path d="M117.5 64.8L121 68.5" fill="none" stroke="#6f5c56" stroke-width="1.8" />
<path d="M114.5 61L116 62L114.8 63.5" fill="none" stroke="#6f5c56" stroke-width="1" />
<g transform="translate(1,1)">
<text x="130" y="60.6" font-family="Liberation Sans,sans-serif" font-size="6.5" font-weight="bold" fill="#e6ddd6" textLength="11.5" lengthAdjust="spacingAndGlyphs">АБВ</text>
<path d="M130.5 64L134.8 68L144.5 57.5" fill="none" stroke="#e6ddd6" stroke-width="1.8" />
</g>
<text x="130" y="60.6" font-family="Liberation Sans,sans-serif" font-size="6.5" font-weight="bold" fill="#6f5c56" textLength="11.5" lengthAdjust="spacingAndGlyphs">АБВ</text>
<path d="M130.5 64L134.8 68L144.5 57.5" fill="none" stroke="#6f5c56" stroke-width="1.8" />
<g transform="translate(1,1)">
<path d="M163.8 55.3L167.2 64M168 55.3L164.6 64" fill="none" stroke="#e6ddd6" stroke-width="1.15" />
<ellipse cx="163.2" cy="66" rx="1.7" ry="2.3" fill="none" stroke="#e6ddd6" stroke-width="1.15"/>
<ellipse cx="168.6" cy="66" rx="1.7" ry="2.3" fill="none" stroke="#e6ddd6" stroke-width="1.15"/>
</g>
<path d="M163.8 55.3L167.2 64M168 55.3L164.6 64" fill="none" stroke="#6f5c56" stroke-width="1.15" />
<ellipse cx="163.2" cy="66" rx="1.7" ry="2.3" fill="none" stroke="#6f5c56" stroke-width="1.15"/>
<ellipse cx="168.6" cy="66" rx="1.7" ry="2.3" fill="none" stroke="#6f5c56" stroke-width="1.15"/>
<g transform="translate(1,1)">
<path d="M111.8 81.3L115.2 90M116 81.3L112.6 90" fill="none" stroke="#e6ddd6" stroke-width="1.15" />
<ellipse cx="111.2" cy="92" rx="1.7" ry="2.3" fill="none" stroke="#e6ddd6" stroke-width="1.15"/>
<ellipse cx="116.6" cy="92" rx="1.7" ry="2.3" fill="none" stroke="#e6ddd6" stroke-width="1.15"/>
</g>
<path d="M111.8 81.3L115.2 90M116 81.3L112.6 90" fill="none" stroke="#6f5c56" stroke-width="1.15" />
<ellipse cx="111.2" cy="92" rx="1.7" ry="2.3" fill="none" stroke="#6f5c56" stroke-width="1.15"/>
<ellipse cx="116.6" cy="92" rx="1.7" ry="2.3" fill="none" stroke="#6f5c56" stroke-width="1.15"/>
<g transform="translate(1,1)">
<path d="M181.8 55.5H185.9L188.5 58.1V64H181.8Z" fill="none" stroke="#e6ddd6" stroke-width="1.15" />
<path d="M185.9 55.5V58.1H188.5" fill="none" stroke="#e6ddd6" stroke-width="0.8" />
<path d="M183.3 58H184.9M183.3 60H186.9M183.3 62H186.9" fill="none" stroke="#e6ddd6" stroke-width="0.9" />
<path d="M188.60000000000002 59.1H192.70000000000002L195.3 61.7V67.6H188.60000000000002Z" fill="none" stroke="#e6ddd6" stroke-width="1.15" />
<path d="M192.70000000000002 59.1V61.7H195.3" fill="none" stroke="#e6ddd6" stroke-width="0.8" />
<path d="M190.10000000000002 61.6H191.70000000000002M190.10000000000002 63.6H193.70000000000002M190.10000000000002 65.6H193.70000000000002" fill="none" stroke="#e6ddd6" stroke-width="0.9" />
</g>
<path d="M181.8 55.5H185.9L188.5 58.1V64H181.8Z" fill="#a9988f" stroke="#6f5c56" stroke-width="1.15" />
<path d="M185.9 55.5V58.1H188.5" fill="none" stroke="#6f5c56" stroke-width="0.8" />
<path d="M183.3 58H184.9M183.3 60H186.9M183.3 62H186.9" fill="none" stroke="#6f5c56" stroke-width="0.9" />
<path d="M188.60000000000002 59.1H192.70000000000002L195.3 61.7V67.6H188.60000000000002Z" fill="#a9988f" stroke="#6f5c56" stroke-width="1.15" />
<path d="M192.70000000000002 59.1V61.7H195.3" fill="none" stroke="#6f5c56" stroke-width="0.8" />
<path d="M190.10000000000002 61.6H191.70000000000002M190.10000000000002 63.6H193.70000000000002M190.10000000000002 65.6H193.70000000000002" fill="none" stroke="#6f5c56" stroke-width="0.9" />
<g transform="translate(1,1)">
<path d="M129.8 81.5H133.9L136.5 84.1V90H129.8Z" fill="none" stroke="#e6ddd6" stroke-width="1.15" />
<path d="M133.9 81.5V84.1H136.5" fill="none" stroke="#e6ddd6" stroke-width="0.8" />
<path d="M131.3 84H132.9M131.3 86H134.9M131.3 88H134.9" fill="none" stroke="#e6ddd6" stroke-width="0.9" />
<path d="M136.60000000000002 85.1H140.70000000000002L143.3 87.69999999999999V93.6H136.60000000000002Z" fill="none" stroke="#e6ddd6" stroke-width="1.15" />
<path d="M140.70000000000002 85.1V87.69999999999999H143.3" fill="none" stroke="#e6ddd6" stroke-width="0.8" />
<path d="M138.10000000000002 87.6H139.70000000000002M138.10000000000002 89.6H141.70000000000002M138.10000000000002 91.6H141.70000000000002" fill="none" stroke="#e6ddd6" stroke-width="0.9" />
</g>
<path d="M129.8 81.5H133.9L136.5 84.1V90H129.8Z" fill="#a9988f" stroke="#6f5c56" stroke-width="1.15" />
<path d="M133.9 81.5V84.1H136.5" fill="none" stroke="#6f5c56" stroke-width="0.8" />
<path d="M131.3 84H132.9M131.3 86H134.9M131.3 88H134.9" fill="none" stroke="#6f5c56" stroke-width="0.9" />
<path d="M136.60000000000002 85.1H140.70000000000002L143.3 87.69999999999999V93.6H136.60000000000002Z" fill="#a9988f" stroke="#6f5c56" stroke-width="1.15" />
<path d="M140.70000000000002 85.1V87.69999999999999H143.3" fill="none" stroke="#6f5c56" stroke-width="0.8" />
<path d="M138.10000000000002 87.6H139.70000000000002M138.10000000000002 89.6H141.70000000000002M138.10000000000002 91.6H141.70000000000002" fill="none" stroke="#6f5c56" stroke-width="0.9" />
<rect x="205" y="57.5" width="14" height="11.5" rx="1.5" fill="#e6ddd6"/>
<rect x="204" y="56.5" width="14" height="11.5" rx="1.5" fill="#6f5c56"/>
<rect x="208.5" y="55.0" width="5" height="2.5" rx="0.8" fill="#6f5c56"/>
<path d="M208.5 59.0H214" fill="none" stroke="#e6ddd6" stroke-width="1" />
<path d="M212.3 62.8H217.3L219.8 65.3V69.8H212.3Z" fill="none" stroke="#e6ddd6" stroke-width="1" />
<path d="M211.5 62.0H216.5L219 64.5V69.0H211.5Z" fill="#a9988f" stroke="#6f5c56" stroke-width="1.1" />
<path d="M213.3 65.2H216.4M213.3 67.2H217.6" fill="none" stroke="#6f5c56" stroke-width="0.9" />
<path d="M213.3 66.1H216.4M213.3 68.0H217.6" fill="none" stroke="#e6ddd6" stroke-width="0.7" />
<rect x="153" y="83.5" width="14" height="11.5" rx="1.5" fill="#e6ddd6"/>
<rect x="152" y="82.5" width="14" height="11.5" rx="1.5" fill="#6f5c56"/>
<rect x="156.5" y="81.0" width="5" height="2.5" rx="0.8" fill="#6f5c56"/>
<path d="M156.5 85.0H162" fill="none" stroke="#e6ddd6" stroke-width="1" />
<path d="M160.3 88.8H165.3L167.8 91.3V95.8H160.3Z" fill="none" stroke="#e6ddd6" stroke-width="1" />
<path d="M159.5 88.0H164.5L167 90.5V95.0H159.5Z" fill="#a9988f" stroke="#6f5c56" stroke-width="1.1" />
<path d="M161.3 91.2H164.4M161.3 93.2H165.6" fill="none" stroke="#6f5c56" stroke-width="0.9" />
<path d="M161.3 92.1H164.4M161.3 94.0H165.6" fill="none" stroke="#e6ddd6" stroke-width="0.7" />
<g transform="translate(1,1)">
<path d="M241.8 55.2L239 58.4" fill="none" stroke="#e6ddd6" stroke-width="3.6" />
<path d="M237 57.6L240.6 61.2" fill="none" stroke="#e6ddd6" stroke-width="1.3" />
<path d="M235.2 59.4L238.8 63" fill="none" stroke="#e6ddd6" stroke-width="1.3" />
<path d="M234.4 60.2L228.0 64.6" fill="none" stroke="#e6ddd6" stroke-width="1.05" />
<path d="M235.15 60.95L229.25 65.44999999999999" fill="none" stroke="#e6ddd6" stroke-width="1.05" />
<path d="M235.9 61.7L230.5 66.3" fill="none" stroke="#e6ddd6" stroke-width="1.05" />
<path d="M236.65 62.45L231.75 67.14999999999999" fill="none" stroke="#e6ddd6" stroke-width="1.05" />
<path d="M237.4 63.2L233.0 68.0" fill="none" stroke="#e6ddd6" stroke-width="1.05" />
<path d="M238.15 63.95L234.25 68.85" fill="none" stroke="#e6ddd6" stroke-width="1.05" />
<path d="M227.5 64.5L234 59.6" fill="none" stroke="#e6ddd6" stroke-width="1" />
<path d="M227.5 69H228.6M229.6 69H230.7M231.7 69H232.6" fill="none" stroke="#e6ddd6" stroke-width="1.1" />
<path d="M233.5 68.5L239 63.5" fill="none" stroke="#e6ddd6" stroke-width="1" />
</g>
<path d="M241.8 55.2L239 58.4" fill="none" stroke="#6f5c56" stroke-width="3.6" />
<path d="M237 57.6L240.6 61.2" fill="none" stroke="#6f5c56" stroke-width="1.3" />
<path d="M235.2 59.4L238.8 63" fill="none" stroke="#6f5c56" stroke-width="1.3" />
<path d="M234.4 60.2L228.0 64.6" fill="none" stroke="#6f5c56" stroke-width="1.05" />
<path d="M235.15 60.95L229.25 65.44999999999999" fill="none" stroke="#6f5c56" stroke-width="1.05" />
<path d="M235.9 61.7L230.5 66.3" fill="none" stroke="#6f5c56" stroke-width="1.05" />
<path d="M236.65 62.45L231.75 67.14999999999999" fill="none" stroke="#6f5c56" stroke-width="1.05" />
<path d="M237.4 63.2L233.0 68.0" fill="none" stroke="#6f5c56" stroke-width="1.05" />
<path d="M238.15 63.95L234.25 68.85" fill="none" stroke="#6f5c56" stroke-width="1.05" />
<path d="M227.5 64.5L234 59.6" fill="none" stroke="#6f5c56" stroke-width="1" />
<path d="M227.5 69H228.6M229.6 69H230.7M231.7 69H232.6" fill="none" stroke="#6f5c56" stroke-width="1.1" />
<path d="M233.5 68.5L239 63.5" fill="none" stroke="#6f5c56" stroke-width="1" />
<path d="M258 59.2V64.5H263.4Z" fill="#00008c" />
<path d="M260.5 62C262 57.5,269.5 56.5,269.8 61.5C269.8 63.2,269.3 64.3,268.6 65" fill="none" stroke="#00008c" stroke-width="1.15" />
<path d="M183 85.2V90.5H188.4Z" fill="#00008c" />
<path d="M185.5 88C187 83.5,194.5 82.5,194.8 87.5C194.8 89.2,194.3 90.3,193.6 91" fill="none" stroke="#00008c" stroke-width="1.15" />
<path d="M289.6 58Q289.6 56.6,291 56.6H294.6Q296 56.6,296 58V59L294.6 60.6V61.5H295.3V62.5H294.6V63.5H295.3V64.5H294.6V65.3L293.2 66.7L291.6 65.3V60.6L289.6 59Z" fill="#c8c800" stroke="#000" stroke-width="1.2" />
<path d="M292.3 59.2V65.2" fill="none" stroke="#fff" stroke-width="1" />
<path d="M290.8 57.8H292.5" fill="none" stroke="#ffff40" stroke-width="1.2" />
<rect x="292" y="58" width="1.3" height="1.3" fill="#000"/>
<rect x="309" y="56" width="5.2" height="1" fill="#000"/>
<rect x="309" y="58" width="5.2" height="1" fill="#000"/>
<rect x="309" y="60" width="5.2" height="1" fill="#000"/>
<rect x="309" y="62" width="5.2" height="1" fill="#000"/>
<rect x="309" y="64" width="5.2" height="1" fill="#000"/>
<rect x="309" y="66" width="5.2" height="1" fill="#000"/>
<path d="M320.8 55.4L324.4 55.4L320.6 60.2L322.8 60.2L316.6 67.4L316.1 67.1L318.8 62.4L315.6 62.4Z" fill="#000" />
<path d="M320 54.8L323.6 54.8L319.8 59.6L322 59.6L315.8 66.8L315.3 66.5L318 61.8L314.8 61.8Z" fill="#ffff00" />
<path d="M320 55L321.5 55L316.6 61.3L315.2 61.5Z" fill="#fff" />
<rect x="337.5" y="54.5" width="6" height="4" fill="#fff" stroke="#000" stroke-width="1"/>
<rect x="337.5" y="64.5" width="6" height="4" fill="#fff" stroke="#000" stroke-width="1"/>
<path d="M343 61.5L346 58.8V64.2Z" fill="#00008c" />
<rect x="345.5" y="61" width="3" height="1" fill="#00008c"/>
<rect x="348.5" y="59.5" width="5" height="4" fill="#30e0e0" stroke="#000" stroke-width="1"/>
<path d="M349 60.5H353M349 62.5H353" fill="none" stroke="#c8ffff" stroke-width="1" stroke-dasharray="1 1"/>
<rect x="359.5" y="54.5" width="7" height="4" fill="#fff" stroke="#000" stroke-width="1"/>
<rect x="359.5" y="64.5" width="7" height="4" fill="#fff" stroke="#000" stroke-width="1"/>
<rect x="359.5" y="59.5" width="11" height="4" fill="#30e0e0" stroke="#000" stroke-width="1"/>
<path d="M360 60.5H370M360.5 62.5H370" fill="none" stroke="#c8ffff" stroke-width="1" stroke-dasharray="1 1"/>
<rect x="371" y="61" width="3" height="1" fill="#00008c"/>
<path d="M376.5 61.5L373.5 58.8V64.2Z" fill="#00008c" />
<rect x="389.5" y="58.5" width="11" height="10" fill="#fff" stroke="#000" stroke-width="1"/>
<path d="M391 63.5H399M391 66.5H399" fill="none" stroke="#000" stroke-width="1.2" />
<rect x="391" y="62.9" width="2" height="1.2" fill="#000"/>
<path d="M392 61L396.5 55.5H402.5V60.5H398L395 63Z" fill="url(#chk)" stroke="#444" stroke-width="0.7" />
<path d="M398.5 56H402.5V60H398.5Z" fill="#b4b4b4" />
<path d="M393 60.5L396 57M395 61.5L398 58" fill="none" stroke="#fff" stroke-width="0.8" stroke-dasharray="1 1"/>
<rect x="403" y="55" width="2" height="7" fill="#00008c"/>
<g transform="translate(1,1)">
<path d="M418 54.6L427.4 64.8" fill="none" stroke="#e6ddd6" stroke-width="2.4" />
<rect x="415.2" y="57.2" width="1.6" height="1.6" fill="#e6ddd6"/>
<rect x="413.2" y="60.8" width="1.6" height="1.6" fill="#e6ddd6"/>
<rect x="417" y="60.4" width="1.6" height="1.6" fill="#e6ddd6"/>
<rect x="415" y="64" width="1.6" height="1.6" fill="#e6ddd6"/>
<rect x="419" y="63.6" width="1.6" height="1.6" fill="#e6ddd6"/>
<rect x="412" y="68" width="2" height="1.4" fill="#e6ddd6"/>
<rect x="415" y="68" width="2" height="1.4" fill="#e6ddd6"/>
<rect x="418" y="68" width="2" height="1.4" fill="#e6ddd6"/>
</g>
<path d="M418 54.6L427.4 64.8" fill="none" stroke="#6f5c56" stroke-width="2.4" />
<rect x="415.2" y="57.2" width="1.6" height="1.6" fill="#6f5c56"/>
<rect x="413.2" y="60.8" width="1.6" height="1.6" fill="#6f5c56"/>
<rect x="417" y="60.4" width="1.6" height="1.6" fill="#6f5c56"/>
<rect x="415" y="64" width="1.6" height="1.6" fill="#6f5c56"/>
<rect x="419" y="63.6" width="1.6" height="1.6" fill="#6f5c56"/>
<rect x="412" y="68" width="2" height="1.4" fill="#6f5c56"/>
<rect x="415" y="68" width="2" height="1.4" fill="#6f5c56"/>
<rect x="418" y="68" width="2" height="1.4" fill="#6f5c56"/>
<rect x="443.5" y="54.5" width="10" height="8" fill="#fff" stroke="#000" stroke-width="1"/>
<rect x="443" y="54" width="11" height="2" fill="#00008c"/>
<rect x="441.5" y="59.5" width="7" height="9" fill="#fff" stroke="#000" stroke-width="1"/>
<rect x="441" y="59" width="8" height="2" fill="#00008c"/>
<rect x="446.5" y="57.5" width="10" height="9" fill="#fff" stroke="#000" stroke-width="1"/>
<rect x="446" y="57" width="11" height="2" fill="#00008c"/>
<rect x="448" y="60.2" width="3" height="1" fill="#777"/>
<rect x="452" y="60.2" width="3" height="1" fill="#777"/>
<rect x="448" y="62.2" width="3" height="1" fill="#777"/>
<rect x="452" y="62.2" width="3" height="1" fill="#777"/>
<rect x="448" y="64.2" width="3" height="1" fill="#777"/>
<rect x="452" y="64.2" width="3" height="1" fill="#777"/>
<rect x="443" y="62.5" width="2" height="1" fill="#777"/>
<rect x="443" y="64.5" width="2" height="1" fill="#777"/>
<rect x="443" y="66.5" width="2" height="1" fill="#777"/>
<rect x="212.5" y="80.5" width="10" height="8" fill="#fff" stroke="#000" stroke-width="1"/>
<rect x="212" y="80" width="11" height="2" fill="#00008c"/>
<rect x="210.5" y="85.5" width="7" height="9" fill="#fff" stroke="#000" stroke-width="1"/>
<rect x="210" y="85" width="8" height="2" fill="#00008c"/>
<rect x="215.5" y="83.5" width="10" height="9" fill="#fff" stroke="#000" stroke-width="1"/>
<rect x="215" y="83" width="11" height="2" fill="#00008c"/>
<rect x="217" y="86.2" width="3" height="1" fill="#777"/>
<rect x="221" y="86.2" width="3" height="1" fill="#777"/>
<rect x="217" y="88.2" width="3" height="1" fill="#777"/>
<rect x="221" y="88.2" width="3" height="1" fill="#777"/>
<rect x="217" y="90.2" width="3" height="1" fill="#777"/>
<rect x="221" y="90.2" width="3" height="1" fill="#777"/>
<rect x="212" y="88.5" width="2" height="1" fill="#777"/>
<rect x="212" y="90.5" width="2" height="1" fill="#777"/>
<rect x="212" y="92.5" width="2" height="1" fill="#777"/>
<rect x="468.5" y="57.5" width="11" height="11" fill="#fff" stroke="#000" stroke-width="1"/>
<rect x="468" y="57" width="12" height="2" fill="#00008c"/>
<rect x="474.5" y="60.5" width="4" height="2.4" fill="#fff" stroke="#000" stroke-width="1.3"/>
<rect x="474.5" y="64.5" width="4" height="2.8" fill="#fff" stroke="#000" stroke-width="1.3"/>
<path d="M470 62H473.5M470 66H473.5" fill="none" stroke="#000" stroke-width="1.4" />
<path d="M472.7 54.9L475.5 54.9L470.4 60L472.6 60L464.7 67L467.8 62.1L465.2 62.1Z" fill="#000" stroke="#000" stroke-width="0.6" />
<path d="M472 54.4L474.6 54.4L469.4 59.4L471.6 59.4L464 66.3L467.2 61.4L464.6 61.4Z" fill="#ffff00" />
<path d="M472 54.6L472.9 54.6L466 61.2L464.9 61.3Z" fill="#fff" />
<path d="M507.6 55.4H519V67H516.4L517.4 70L513.4 67H507.6Z" fill="#000" />
<path d="M507.5 54.6H517.5Q518.4 54.6,518.4 55.5V65.5Q518.4 66.4,517.5 66.4H516L516.8 69.2L513 66.4H507.5Q506.6 66.4,506.6 65.5V55.5Q506.6 54.6,507.5 54.6Z" fill="url(#dots)" stroke="#000" stroke-width="1" />
<text x="509.3" y="64.6" font-family="Liberation Sans,sans-serif" font-size="11.5" font-weight="bold" fill="#00008c">?</text>
<path d="M236.6 81.4H248V93H245.4L246.4 96L242.4 93H236.6Z" fill="#000" />
<path d="M236.5 80.6H246.5Q247.4 80.6,247.4 81.5V91.5Q247.4 92.4,246.5 92.4H245L245.8 95.2L242 92.4H236.5Q235.6 92.4,235.6 91.5V81.5Q235.6 80.6,236.5 80.6Z" fill="url(#dots)" stroke="#000" stroke-width="1" />
<text x="238.3" y="90.6" font-family="Liberation Sans,sans-serif" font-size="11.5" font-weight="bold" fill="#00008c">?</text>
<path d="M13.8 84.5L15.7 84.5" fill="none" stroke="#ffff00" stroke-width="1.1" />
<path d="M17.8 80.5L17.8 82.3" fill="none" stroke="#ffff00" stroke-width="1.1" />
<path d="M14.8 81.7L16.1 83.0" fill="none" stroke="#ffff00" stroke-width="1.1" />
<path d="M19.8 82.7L21.3 81.2" fill="none" stroke="#ffff00" stroke-width="1.1" />
<path d="M14.8 87.4L16.2 86.0" fill="none" stroke="#ffff00" stroke-width="1.1" />
<rect x="16.8" y="83.3" width="2.2" height="2.6" fill="#fff"/>
<rect x="20.1" y="81.9" width="1.4" height="1.4" fill="#fff"/>
<rect x="15.0" y="86.3" width="1.4" height="1.4" fill="#fff"/>
<rect x="15.5" y="82.5" width="1" height="1" fill="#fff"/>
<g transform="translate(19.9,86.1) rotate(45)"><rect x="-2.9" y="-1.5" width="5.8" height="3" rx="1.3" fill="#000"/><rect x="-1" y="-0.55" width="2" height="1.1" fill="#c000c0"/></g>
<g transform="translate(25.1,85.9) rotate(-45)"><rect x="-2.9" y="-1.5" width="5.8" height="3" rx="1.3" fill="#000"/><rect x="-1" y="-0.55" width="2" height="1.1" fill="#00e0e0"/></g>
<g transform="translate(19.7,91.4) rotate(-45)"><rect x="-2.9" y="-1.5" width="5.8" height="3" rx="1.3" fill="#000"/><rect x="-1" y="-0.55" width="2" height="1.1" fill="#00a000"/></g>
<g transform="translate(25.5,91.9) rotate(45)"><rect x="-2.9" y="-1.5" width="5.8" height="3" rx="1.3" fill="#000"/><rect x="-1" y="-0.55" width="2" height="1.1" fill="#ffff00"/></g>
<path d="M20.0 87.5V90.0" fill="none" stroke="#000" stroke-width="1.6" />
</svg>
</div></body></html>
